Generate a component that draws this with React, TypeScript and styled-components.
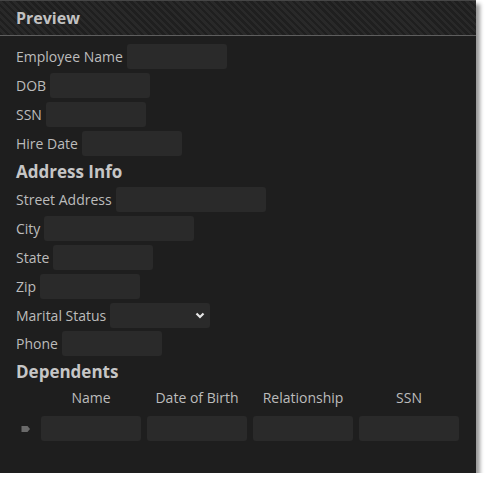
import React from 'react';
import styled, { createGlobalStyle } from 'styled-components';

const GlobalStyle = createGlobalStyle`
  html, body {
    margin: 0;
    padding: 0;
    background: #ffffff;
  }
  body {
    font-family: "Open Sans", "Noto Sans", sans-serif;
  }
`;

const Panel = styled.div`
  width: 476px;
  height: 473px;
  box-sizing: border-box;
  background: #1e1e1e;
  border-top: 1px solid #454545;
  box-shadow: 4px 4px 4px rgba(0, 0, 0, 0.4);
  display: flex;
  flex-direction: column;
`;

const Header = styled.div`
  height: 34px;
  flex: none;
  border-bottom: 1px solid #5e5e5e;
  background: repeating-linear-gradient(45deg, #1f1f1f 0 2.5px, #292929 2.5px 5px);
  display: flex;
  align-items: center;
  padding-left: 16px;
  font-size: 16px;
  font-weight: 700;
  color: #c2c2c2;
`;

const Body = styled.div`
  padding: 8px 0 0 16px;
  display: flex;
  flex-direction: column;
  gap: 4px;
`;

const Row = styled.div<{ $tight?: boolean }>`
  display: flex;
  align-items: center;
  gap: 4px;
  height: 25px;
  margin-top: ${(p) => (p.$tight ? '-1px' : '0')};
`;

const Label = styled.span`
  font-size: 14px;
  color: #bcbcbc;
  white-space: nowrap;
`;

const Input = styled.div<{ $w?: number }>`
  width: ${(p) => p.$w ?? 100}px;
  height: 25px;
  border-radius: 3px;
  background: #2a2a2a;
  flex: none;
`;

const Select = styled(Input)`
  display: flex;
  align-items: center;
  justify-content: flex-end;
  padding-right: 5px;
  box-sizing: border-box;
`;

const Heading = styled.div`
  height: 23px;
  display: flex;
  align-items: center;
  font-size: 17px;
  font-weight: 700;
  color: #c6c6c6;
`;

const Table = styled.div`
  display: grid;
  grid-template-columns: 25px repeat(4, 100px);
  column-gap: 6px;
  row-gap: 8px;
  margin-left: -6px;
`;

const Th = styled.div`
  height: 21px;
  display: flex;
  align-items: center;
  justify-content: center;
  font-size: 14px;
  color: #bcbcbc;
`;

const RowMarker = styled.div`
  display: flex;
  align-items: center;
  justify-content: center;
  padding-left: 5px;
`;

const Chevron = () => (
  <svg width="10" height="7" viewBox="0 0 10 7">
    <path d="M1.5 1.5 L5 5 L8.5 1.5" fill="none" stroke="#e6e6e6" strokeWidth="2.2" />
  </svg>
);

const Marker = () => (
  <svg width="9" height="6" viewBox="0 0 9 6">
    <path d="M0.5 0 H6.5 L9 3 L6.5 6 H0.5 Z" fill="#6a6a6a" />
  </svg>
);

const fields: [string, number][] = [
  ['Employee Name', 100],
  ['DOB', 100],
  ['SSN', 100],
  ['Hire Date', 100],
];

const address: [string, number][] = [
  ['Street Address', 150],
  ['City', 150],
  ['State', 100],
  ['Zip', 100],
];

const App = () => (
  <>
    <GlobalStyle />
    <Panel>
      <Header>Preview</Header>
      <Body>
        {fields.map(([label, w]) => (
          <Row key={label}>
            <Label>{label}</Label>
            <Input $w={w} />
          </Row>
        ))}
        <Heading>Address Info</Heading>
        {address.map(([label, w]) => (
          <Row key={label}>
            <Label>{label}</Label>
            <Input $w={w} />
          </Row>
        ))}
        <Row>
          <Label>Marital Status</Label>
          <Select>
            <Chevron />
          </Select>
        </Row>
        <Row $tight>
          <Label>Phone</Label>
          <Input />
        </Row>
        <Heading>Dependents</Heading>
        <Table>
          <div />
          <Th>Name</Th>
          <Th>Date of Birth</Th>
          <Th>Relationship</Th>
          <Th>SSN</Th>
          <RowMarker>
            <Marker />
          </RowMarker>
          <Input />
          <Input />
          <Input />
          <Input />
        </Table>
      </Body>
    </Panel>
  </>
);

export default App;
